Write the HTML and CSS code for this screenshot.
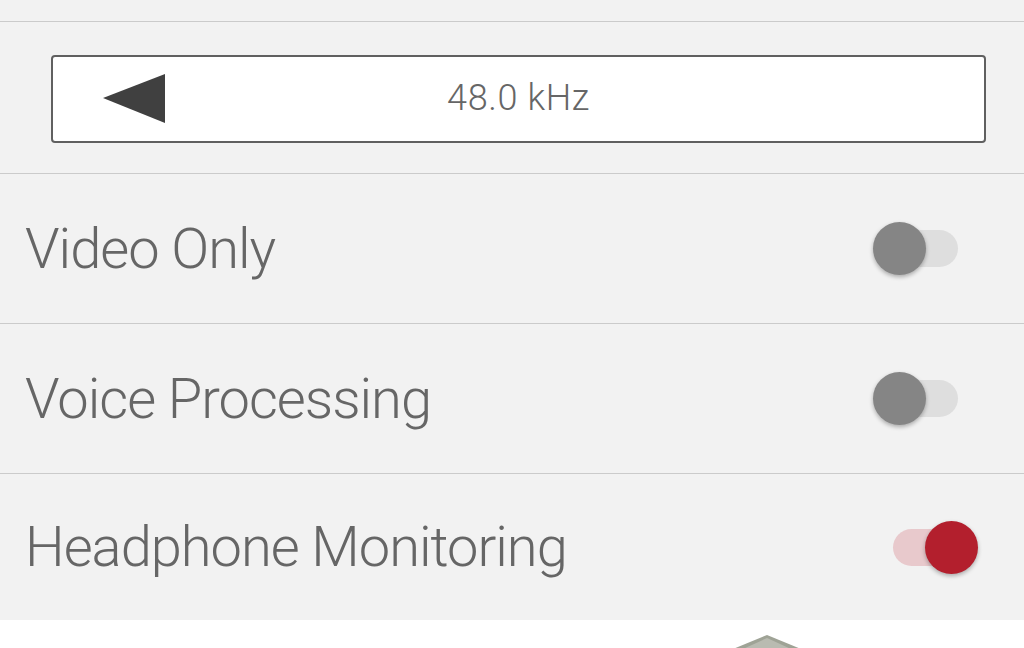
FILE: index.html
```html
<!DOCTYPE html>
<html lang="en">
<head>
    <meta charset="UTF-8">
    <meta name="viewport" content="width=device-width, initial-scale=1.0">
    <title>Audio Settings</title>
    <link rel="stylesheet" href="styles.css">
</head>
<body>
    <div class="settings">
        <div class="row row-cut"></div>

        <div class="row row-select">
            <div class="picker">
                <svg class="picker-arrow" width="62" height="50" viewBox="0 0 62 50">
                    <polygon points="0,24 62,0 62,49" fill="#404040"/>
                </svg>
                <span class="picker-value">48.0 kHz</span>
            </div>
        </div>

        <div class="row">
            <span class="label">Video Only</span>
            <div class="switch"><div class="track"></div><div class="thumb"></div></div>
        </div>

        <div class="row">
            <span class="label">Voice Processing</span>
            <div class="switch"><div class="track"></div><div class="thumb"></div></div>
        </div>

        <div class="row row-last">
            <span class="label">Headphone Monitoring</span>
            <div class="switch on"><div class="track"></div><div class="thumb"></div></div>
        </div>
    </div>

    <div class="footer">
        <svg class="footer-logo" width="68" height="14" viewBox="0 0 68 14">
            <polygon points="0,14 34,0 68,14" fill="#9fa396"/>
            <polygon points="10,14 34,3 58,14" fill="#b9bbb1"/>
        </svg>
    </div>
</body>
</html>
```

FILE: styles.css
```css
body {
    margin: 0;
    background-color: #ffffff;
    font-family: Roboto, "Liberation Sans", sans-serif;
    font-weight: 300;
    color: #666666;
    overflow: hidden;
}

.settings {
    background-color: #f2f2f2;
}

.row {
    display: flex;
    align-items: center;
    justify-content: space-between;
    height: 149px;
    padding: 0 46px 0 25px;
    border-bottom: 1px solid #cbcbcb;
}

.row-cut {
    height: 21px;
}

.row-select {
    height: 149px;
    padding: 2px 38px 0 51px;
}

.row-last {
    height: 146px;
    border-bottom: none;
}

.picker {
    flex: 1;
    height: 84px;
    display: flex;
    align-items: center;
    position: relative;
    background-color: #ffffff;
    border: 2px solid #606060;
    border-radius: 4px;
}

.picker-arrow {
    position: absolute;
    left: 50px;
    top: 17px;
}

.picker-value {
    flex: 1;
    text-align: center;
    font-size: 36px;
    letter-spacing: 0.6px;
    color: #666666;
    margin-top: -2px;
}

.label {
    font-size: 56px;
    letter-spacing: -1px;
}

.switch {
    position: relative;
    width: 105px;
    height: 53px;
}

.track {
    position: absolute;
    left: 20px;
    top: 8px;
    width: 65px;
    height: 37px;
    border-radius: 19px;
    background-color: #dedede;
}

.thumb {
    position: absolute;
    left: 0;
    top: 0;
    width: 53px;
    height: 53px;
    border-radius: 50%;
    background-color: #858585;
    box-shadow: 0 2px 4px rgba(0,0,0,0.3);
}

.switch.on .track {
    background-color: #e8c9cc;
}

.switch.on .thumb {
    left: 52px;
    background-color: #b31f2d;
}

.footer {
    height: 29px;
    display: flex;
    align-items: flex-end;
    padding-left: 733px;
}

.footer-logo {
    display: block;
}
```
